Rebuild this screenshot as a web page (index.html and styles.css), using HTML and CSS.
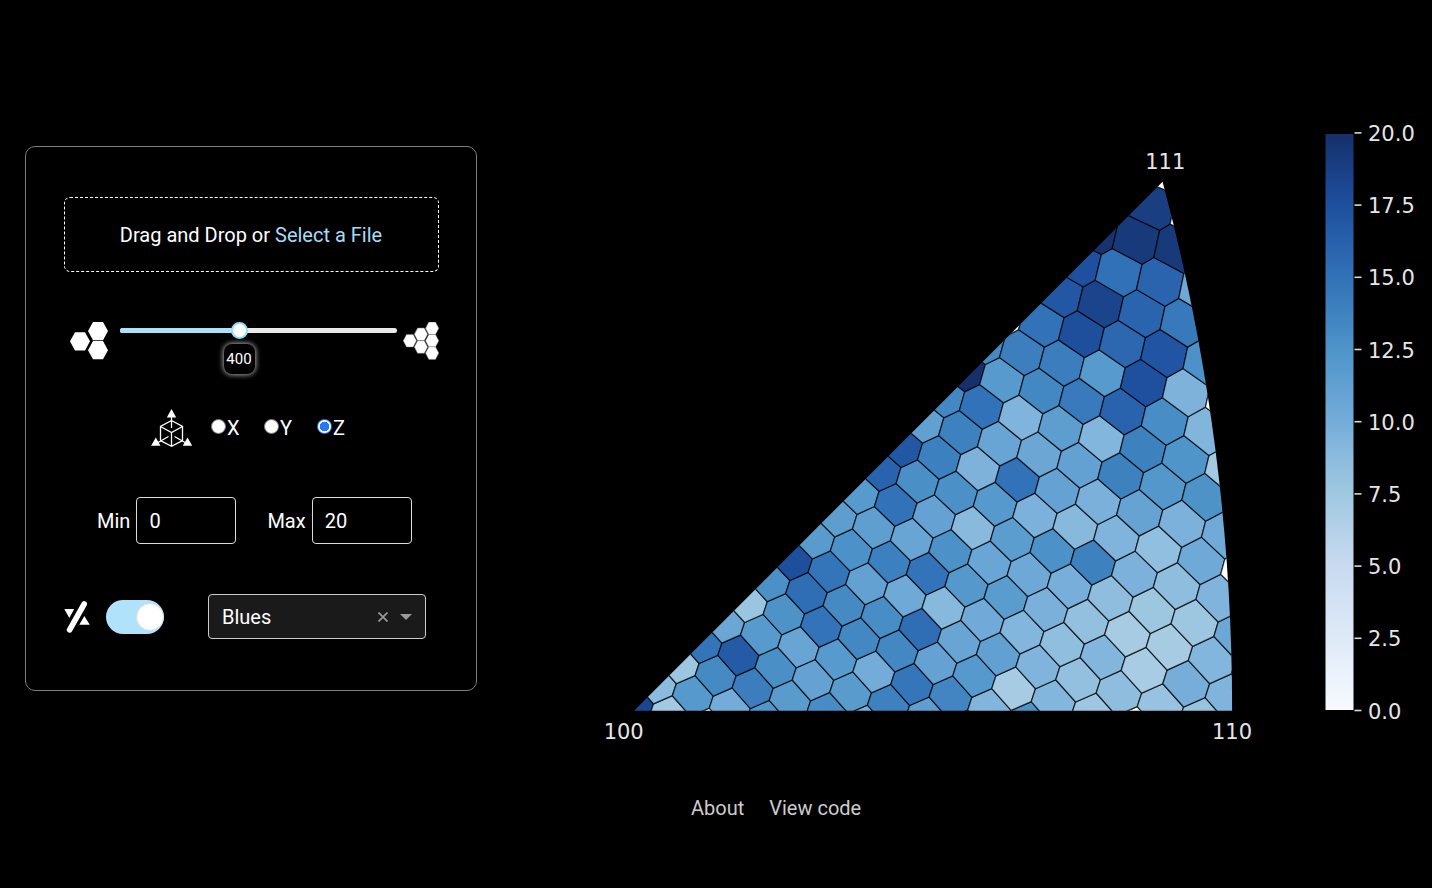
FILE: index.html
```html
<!DOCTYPE html>
<html lang="en">
<head>
<meta charset="utf-8">
<title>Inverse pole figure</title>
<link rel="stylesheet" href="styles.css">
</head>
<body>
<main class="layout">
  <form class="panel">
    <div class="upload"><span>Drag and Drop or <a class="upload-link">Select a File</a></span></div>

    <div class="density">
      <svg class="hex-large" width="38" height="38" viewBox="0 0 38 38" fill="#fff">
        <path d="M0 19.3 5 10.2H15L20 19.3 15 28.4H5Z"/>
        <path d="M18 9.1 23 0H33L38 9.1 33 18.2H23Z"/>
        <path d="M18 28.2 23 19.1H33L38 28.2 33 37.3H23Z"/>
      </svg>
      <div class="slider">
        <div class="slider-track"><div class="slider-fill"></div></div>
        <div class="slider-handle"></div>
        <div class="slider-tip">400</div>
      </div>
      <svg class="hex-small" width="37" height="38" viewBox="0 0 37 38" fill="#fff" stroke="#777" stroke-width=".5">
        <path id="h" d="M.2 18.7 3.5 12.4H10.2L13.5 18.7 10.2 25H3.5Z"/>
        <use href="#h" x="11.1" y="-6.4"/><use href="#h" x="11.1" y="6.3"/>
        <use href="#h" x="22.3" y="-12.4"/><use href="#h" x="22.3" y="0"/><use href="#h" x="22.3" y="12.4"/>
      </svg>
    </div>

    <div class="axes">
      <svg width="42" height="39" viewBox="0 0 42 39" fill="none" stroke="#fff" stroke-width="1.3">
        <path d="M20.5 7V19M20.5 11.5 9.5 17.5V31.5L20.5 37.3 31.5 31.5V17.5L20.5 11.5M9.5 17.5 20.5 23.5 31.5 17.5M20.5 23.5V37.3M17.5 27.5 7 33.5M23.5 27.5 34 33.5"/>
        <path d="M20.5 0 25.2 8.4H15.8ZM4.8 28.4 9.5 36.8H.1ZM36.5 28.4 41.2 36.8H31.8Z" fill="#fff" stroke="none"/>
      </svg>
      <label class="radio"><input type="radio" name="axis">X</label>
      <label class="radio"><input type="radio" name="axis">Y</label>
      <label class="radio"><input type="radio" name="axis" checked>Z</label>
    </div>

    <div class="range">
      <label class="range-field">Min<input type="text" value="0"></label>
      <label class="range-field">Max<input type="text" value="20"></label>
    </div>

    <div class="scheme">
      <svg width="26" height="32" viewBox="0 0 26 32" fill="#fff">
        <path d="M20.2 3 5.6 28.8" stroke="#fff" stroke-width="5.6" stroke-linecap="round"/>
        <path d="M.3 8H10.2L5.3 17ZM20.3 15 25.8 23.8H15.3Z"/>
      </svg>
      <div class="switch"><div class="switch-knob"></div></div>
      <div class="select">
        <span class="select-value">Blues</span>
        <svg width="10" height="10" viewBox="0 0 10 10" stroke="#999" stroke-width="1.7"><path d="M.5.5 9.5 9.5M9.5.5.5 9.5"/></svg>
        <svg width="12" height="6" viewBox="0 0 12 6" fill="#999"><path d="M0 0H12L6 6Z"/></svg>
      </div>
    </div>
  </form>

  <svg class="figure" width="852" height="640" viewBox="580 120 852 640">
    <defs>
      <clipPath id="zone"><polygon id="zone-shape"/></clipPath>
      <linearGradient id="ramp" x1="0" y1="1" x2="0" y2="0"></linearGradient>
    </defs>
    <g id="cells" clip-path="url(#zone)"></g>
    <g class="figure-text" text-anchor="middle">
      <text x="1165.3" y="168.5">111</text>
      <text x="623.7" y="739">100</text>
      <text x="1232" y="739">110</text>
    </g>
    <rect x="1325.5" y="134" width="28" height="576" fill="url(#ramp)"/>
    <g class="figure-text" id="ticks"></g>
  </svg>
</main>
<footer class="links"><a>About</a><a>View code</a></footer>
<script src="plot.js"></script>
</body>
</html>
```

FILE: styles.css
```css
* { box-sizing: border-box; }
body { margin: 0; background: #000; color: #fff; font: 20px/24px Roboto, sans-serif; }
.layout { display: flex; align-items: flex-start; padding: 120px 0 0 25px; }
.panel { width: 452px; height: 545px; margin-top: 26px; padding: 50px 37px 0 38px; border: 1px solid #7d7d7d; border-radius: 10px; }
.figure { margin-left: 103px; flex: none; }

.upload { display: flex; align-items: center; justify-content: center; height: 75px; padding-right: 1px; border: 1px dashed #fff; border-radius: 6px; }
.upload-link { color: #a6dcf7; }

.density { display: flex; align-items: flex-start; margin-top: 50px; padding-left: 6px; }
.density svg { flex: none; }
.slider { position: relative; flex: none; width: 277px; height: 60px; margin: 0 6px 0 12px; }
.slider-track { height: 5px; margin-top: 6px; border-radius: 3px; background: #e9e9e9; overflow: hidden; }
.slider-fill { width: 43%; height: 100%; background: #abe2fb; }
.slider-handle { position: absolute; left: 110.5px; top: 0; width: 17px; height: 17px; border: 2px solid #96dbfa; border-radius: 50%; background: #fff; }
.slider-tip { position: absolute; left: 103.5px; top: 22px; width: 31px; height: 30px; border-radius: 8px; background: #000; box-shadow: 0 0 5px 1px #a5a5a5; font-size: 15px; line-height: 30px; text-align: center; }

.axes { display: flex; align-items: flex-start; margin-top: 27px; padding-left: 87px; }
.axes svg { margin-right: 18px; }
.radio { display: flex; width: 53px; padding-top: 7px; }
.radio input { appearance: none; flex: none; width: 15px; height: 15px; margin: 3px 1px 0 0; border: 1px solid #767676; border-radius: 50%; background: #fff; }
.radio input:checked { border: 1.5px solid #2478ff; background: radial-gradient(#2478ff 4.5px, #fff 5.1px); }

.range { display: flex; gap: 31px; margin-top: 49px; padding-left: 33px; }
.range-field { display: flex; align-items: center; gap: 6px; }
.range-field input { width: 100px; height: 47px; padding: 0 12px; border: 1px solid #ddd; border-radius: 4px; background: #000; color: #fff; font: inherit; }

.scheme { display: flex; align-items: center; margin-top: 50px; }
.switch { display: flex; align-items: center; justify-content: flex-end; width: 58px; height: 34px; margin-left: 16px; border-radius: 17px; background: #b1e2fb; }
.switch-knob { width: 28px; height: 28px; border: 1px solid #d5dde2; border-radius: 50%; background: #fff; }
.select { display: flex; align-items: center; width: 218px; height: 45px; margin-left: 44px; padding: 0 13px; border: 1px solid #ccc; border-radius: 4px; background: #1a1a1a; }
.select-value { flex: 1; }
.select svg + svg { margin-left: 12px; }

.figure-text { font: 21px "DejaVu Sans", sans-serif; fill: #e6e6e6; }
.cell { stroke: #000; stroke-opacity: .7; stroke-width: 1.3; }
.tick { stroke: #d8d8d8; stroke-width: 1.6; }

.links { display: flex; gap: 25px; padding: 36px 0 0 691px; color: #ccc; }
```

FILE: plot.js
```js
// Stereographic projection of a Fibonacci sphere grid onto the 100-110-111 zone.
const X0 = 634, Y0 = 710.3, R = 1444;
const N = 6400, Z0 = 0.0755, F0 = 8.28, GOLDEN = 180 * (3 - Math.sqrt(5));

// Cell values: row index -> [first column, values...]
const rows = {
  '18': [1, 18.9],
  '17': [0, 19.8, 19.3, 19.3],
  '16': [0, 17.5, 15.1, 16, 10.4],
  '15': [0, 17, 18.4, 16, 14.5],
  '14': [0, 15, 17.6, 15.8, 17.1, 12.7],
  '13': [-1, 13.2, 14.1, 14.2, 11.9, 17.5, 9.5],
  '12': [-1, 20, 11.9, 13.4, 14.4, 16.1, 13, 9.3],
  '11': [-1, 13.4, 15, 9.4, 11.5, 9.2, 13.9, 12.4, 7.2],
  '10': [-1, 11.2, 13.9, 10.8, 10.6, 11.1, 13.9, 12.2, 12.6],
  '9': [-1, 17, 14, 9.5, 15, 11, 9.7, 10.9, 9.6, 10.2],
  '8': [-1, 16.1, 12.9, 12.8, 12, 9.6, 9, 9.4, 8.4, 10.3],
  '7': [-1, 11.9, 15, 11, 8.9, 11.6, 12.7, 13.9, 9.6, 8.6, 9.4],
  '6': [-1, 11.5, 11.4, 10.8, 12.7, 10.7, 10.4, 9.8, 8.6, 7.6, 7.6, 10.5],
  '5': [-1, 11.8, 12.7, 14, 14.9, 12.1, 11.7, 9.7, 8.3, 7.1, 7.1, 9.2],
  '4': [-1, 17.6, 14.8, 11.1, 10.3, 9, 10.2, 9.2, 8.5, 9.2, 7, 9.9, 9.4],
  '3': [-1, 12.8, 15.4, 13.2, 13, 15.4, 10.8, 11.2, 9.4, 8.3, 8.6, 8, 8],
  '2': [-1, 7.8, 12.6, 14.9, 13.4, 13.4, 11, 12, 7.1, 9.2, 7.7],
  '1': [-1, 10.6, 11.9, 10.8, 11.9, 10, 14.7, 13.6, 9.3, 12.6],
  '0': [-1, 14.8, 16.8, 12.9, 11, 11.8, 13.9, 11.4],
  '-1': [-1, 7.6, 13.2, 14.2, 11.8, 13.1, 9.8],
  '-2': [-1, 8.8, 12, 10, 12.3],
  '-3': [-1, 18.2, 7.4]
};

const stops = [
  [0, 247, 250, 255], [2.5, 222, 233, 247], [5, 200, 218, 240], [7.5, 159, 200, 225],
  [8.8, 139, 187, 222], [10, 116, 172, 217], [12.5, 78, 148, 201], [15, 50, 114, 184],
  [17.5, 30, 80, 159], [20, 21, 48, 107]
];
function color(v) {
  const i = Math.max(1, stops.findIndex(s => v <= s[0]));
  const a = stops[i - 1], b = stops[i], t = (v - a[0]) / (b[0] - a[0]);
  return `rgb(${[1, 2, 3].map(k => Math.round(a[k] + t * (b[k] - a[k])))})`;
}

const wrap = a => a - 360 * Math.round(a / 360);
function site(p, q) {
  const z = Z0 - 2 * (55 * p - 89 * q) / N;
  const f = (F0 + p * wrap(55 * GOLDEN) - q * wrap(89 * GOLDEN)) * Math.PI / 180;
  const s = Math.sqrt(1 - z * z);
  return [s * Math.cos(f), s * Math.sin(f), z];
}
const project = v => [X0 + R * v[1] / (1 + v[0]), Y0 - R * v[2] / (1 + v[0])];
function corner(a, b, c) {
  const u = b.map((t, i) => t - a[i]), w = c.map((t, i) => t - a[i]);
  const n = [u[1] * w[2] - u[2] * w[1], u[2] * w[0] - u[0] * w[2], u[0] * w[1] - u[1] * w[0]];
  const l = Math.hypot(...n) * Math.sign(n[0]);
  return project(n.map(t => t / l));
}
const points = list => list.map(p => p.map(k => k.toFixed(2)).join()).join(' ');

const around = [[1, 0], [0, 1], [-1, 1], [-1, 0], [0, -1], [1, -1]];
let cells = '';
for (let q = -6; q <= 20; q++) {
  for (let p = -3; p <= 13; p++) {
    const c = site(p, q), [x, y] = project(c);
    if (x < 600 || x > 1265 || y > 745) continue;
    const poly = around.map((d, i) => {
      const e = around[(i + 1) % 6];
      return corner(c, site(p + d[0], q + d[1]), site(p + e[0], q + e[1]));
    });
    const row = rows[q], v = row && p >= row[0] ? row[p - row[0] + 1] : undefined;
    cells += `<polygon class="cell" points="${points(poly)}" fill="${v === undefined ? '#fff' : color(v)}"/>`;
  }
}
document.getElementById('cells').innerHTML = cells;

const zone = [[X0, Y0 + .5]];
for (let i = 0; i <= 20; i++) {
  const v = [1, 1, i / 20], l = Math.hypot(...v);
  zone.push(project(v.map(k => k / l)));
}
zone[1][1] += .5;
document.getElementById('zone-shape').setAttribute('points', points(zone));

document.getElementById('ramp').innerHTML =
  stops.map(s => `<stop offset="${s[0] / 20}" stop-color="${color(s[0])}"/>`).join('');
let ticks = '';
for (let i = 0; i <= 8; i++) {
  const y = 710.5 - i * 72.2;
  ticks += `<path class="tick" d="M1354.5 ${y}H1361.5"/><text x="1368" y="${y + 8}">${(i * 2.5).toFixed(1)}</text>`;
}
document.getElementById('ticks').innerHTML = ticks;
```
